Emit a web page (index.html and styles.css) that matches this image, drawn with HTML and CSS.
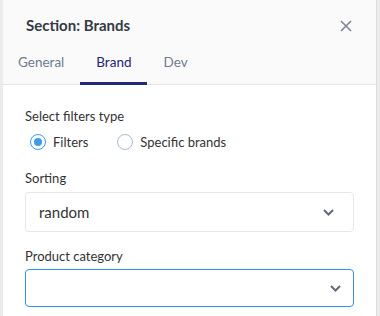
FILE: index.html
```html
<!DOCTYPE html>
<html>
<head>
<meta charset="utf-8">
<link rel="stylesheet" href="styles.css">
</head>
<body>
<div class="panel">
  <div class="header">
    <div class="title-row">
      <span class="title">Section: Brands</span>
      <svg class="close" width="12" height="12" viewBox="0 0 12 12"><path d="M1 1L11 11M11 1L1 11" stroke="#7d8797" stroke-width="1.6" fill="none"/></svg>
    </div>
    <div class="tabs">
      <span class="tab">General</span>
      <span class="tab active">Brand</span>
      <span class="tab">Dev</span>
    </div>
  </div>
  <div class="content">
    <div class="label first">Select filters type</div>
    <div class="radios">
      <span class="radio checked"><span class="circle"></span>Filters</span>
      <span class="radio"><span class="circle"></span>Specific brands</span>
    </div>
    <div class="label sorting">Sorting</div>
    <div class="select">
      <span class="value">random</span>
      <svg class="chev" width="11" height="7" viewBox="0 0 11 7"><path d="M1 1L5.5 5.5L10 1" stroke="#5f6b7e" stroke-width="2" fill="none"/></svg>
    </div>
    <div class="label category">Product category</div>
    <div class="select focused">
      <span class="value"></span>
      <svg class="chev" width="11" height="7" viewBox="0 0 11 7"><path d="M1 1L5.5 5.5L10 1" stroke="#5f6b7e" stroke-width="2" fill="none"/></svg>
    </div>
  </div>
</div>
</body>
</html>
```
FILE: styles.css
```css
html, body {
  margin: 0;
  padding: 0;
}
body {
  background: #ebebeb;
  font-family: Lato, "Liberation Sans", sans-serif;
  width: 380px;
  height: 316px;
  overflow: hidden;
}
.panel {
  margin-left: 3px;
  width: 373px;
  height: 316px;
  background: #fff;
  border-right: 1px solid #dcdcdc;
}
.header {
  background: #fafafa;
  border-bottom: 1px solid #e4e4e4;
}
.title-row {
  display: flex;
  justify-content: space-between;
  align-items: center;
  padding: 15px 24px 0 23px;
  height: 20px;
}
.title {
  font-size: 15px;
  font-weight: 700;
  color: #353a44;
  line-height: 20px;
}
.close {
  display: block;
  margin-top: 1px;
}
.tabs {
  display: flex;
  margin-bottom: -1px;
}
.tab {
  padding: 17px 16px 10px;
  line-height: 20px;
  font-size: 13.5px;
  color: #6f7b8f;
  border-bottom: 3px solid transparent;
}
.tab:first-child { padding-left: 15px; }
.tab.active {
  color: #1f2775;
  border-bottom-color: #1f2a7a;
}
.content {
  padding: 0 22px;
}
.label {
  font-size: 13px;
  line-height: 20px;
  color: #333;
}
.label.first { padding-top: 21px; }
.label.sorting { margin-top: 16px; }
.label.category { margin-top: 14px; }
.radios {
  display: flex;
  margin-top: 6px;
  height: 20px;
  align-items: center;
}
.radio {
  display: flex;
  align-items: center;
  font-size: 13px;
  color: #333;
  margin-right: 29px;
}
.radio:first-child { margin-left: 5px; }
.circle {
  width: 14px;
  height: 14px;
  border: 1.5px solid #a8bdd2;
  border-radius: 50%;
  margin-right: 7px;
  box-sizing: content-box;
  position: relative;
}
.checked .circle {
  border-color: #3d9be9;
}
.checked .circle::after {
  content: "";
  position: absolute;
  left: 3px;
  top: 3px;
  width: 8px;
  height: 8px;
  border-radius: 50%;
  background: #3d9be9;
}
.select {
  margin-top: 4px;
  height: 38px;
  border: 1px solid #e6e6e6;
  border-radius: 4px;
  display: flex;
  align-items: center;
  justify-content: space-between;
  padding: 0 19px 0 13px;
}
.select .value {
  font-size: 15px;
  color: #333;
}
.select.focused {
  margin-top: 3px;
  height: 36px;
  border-color: #3a8ef2;
  padding-right: 12px;
}
.chev { display: block; }
```
